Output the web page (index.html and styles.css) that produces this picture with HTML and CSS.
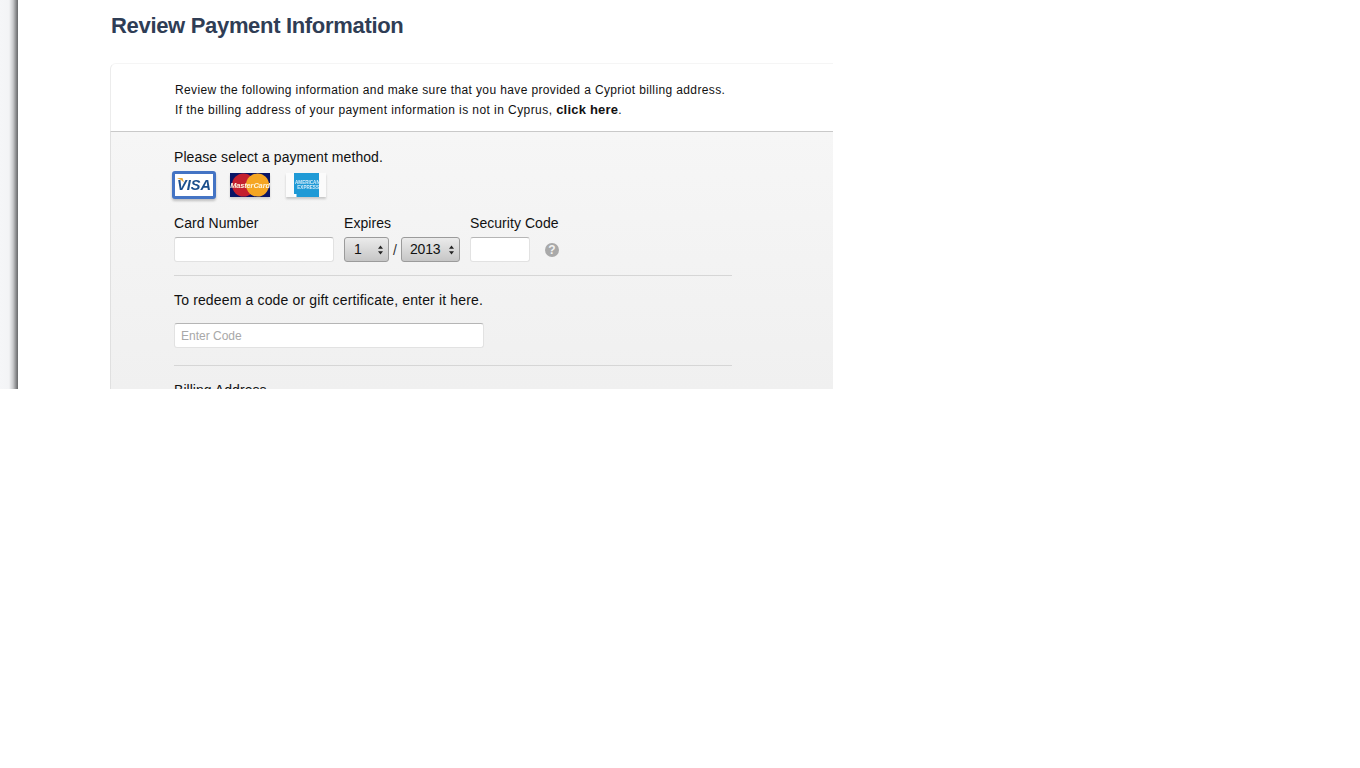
FILE: index.html
```html
<!DOCTYPE html>
<html lang="en">
<head>
<meta charset="utf-8">
<title>Review Payment Information</title>
<link rel="stylesheet" href="styles.css">
</head>
<body>
<div class="viewport">
  <div class="strip"></div>
  <main class="main">
    <h1 class="title">Review Payment Information</h1>
    <section class="card">
      <div class="notice">
        <p>Review the following information and make sure that you have provided a Cypriot billing address.</p>
        <p class="notice-second">If the billing address of your payment information is not in Cyprus, <a class="link" href="#">click here</a>.</p>
      </div>
      <div class="form">
        <div class="prompt">Please select a payment method.</div>
        <div class="methods">
          <div class="method method-visa">
            <svg width="46" height="32" viewBox="0 0 46 32">
              <rect x="2.5" y="2.5" width="41" height="25" rx="1.5" fill="#fff" stroke="#4474c4" stroke-width="3"/>
              <path d="M6 8 L11.5 8 L13 12.5 Q10.5 9.5 6 8Z" fill="#e9a93a"/>
              <text x="23" y="19.5" text-anchor="middle" class="visa-text">VISA</text>
            </svg>
          </div>
          <div class="method method-mc">
            <svg width="40" height="24" viewBox="0 0 40 24">
              <rect width="40" height="24" fill="#0a1566"/>
              <circle cx="13.5" cy="12" r="11.5" fill="#c4202e"/>
              <circle cx="27.5" cy="12" r="11.5" fill="#f5a623"/>
              <text x="20" y="14.5" text-anchor="middle" class="mc-text">MasterCard</text>
            </svg>
          </div>
          <div class="method method-amex">
            <svg width="40" height="24" viewBox="0 0 40 24">
              <rect width="40" height="24" fill="#fbfbfb"/>
              <rect x="8" y="0" width="25" height="24" fill="#1f9ad6"/>
              <rect x="8" y="21" width="2.5" height="3" fill="#fff"/>
              <text x="9" y="11" class="amex-text">AMERICAN</text>
              <text x="33" y="16" text-anchor="end" class="amex-text">EXPRESS</text>
            </svg>
          </div>
        </div>
        <div class="fields">
          <div class="field">
            <label class="label" for="num">Card Number</label>
            <input class="input input-card" id="num" type="text">
          </div>
          <div class="field">
            <span class="label">Expires</span>
            <div class="expires">
              <div class="select select-month">
                <span class="select-value">1</span>
                <svg class="arrows" width="5" height="10" viewBox="0 0 5 10"><path d="M2.5 0.5 L5 3.8 H0Z M2.5 9.5 L5 6.2 H0Z" fill="#222"/></svg>
              </div>
              <span class="slash">/</span>
              <div class="select select-year">
                <span class="select-value">2013</span>
                <svg class="arrows" width="5" height="10" viewBox="0 0 5 10"><path d="M2.5 0.5 L5 3.8 H0Z M2.5 9.5 L5 6.2 H0Z" fill="#222"/></svg>
              </div>
            </div>
          </div>
          <div class="field">
            <label class="label" for="sec">Security Code</label>
            <div class="security">
              <input class="input input-sec" id="sec" type="text">
              <span class="help">?</span>
            </div>
          </div>
        </div>
        <hr class="rule rule-first">
        <div class="redeem">To redeem a code or gift certificate, enter it here.</div>
        <input class="input input-code" type="text" placeholder="Enter Code">
        <hr class="rule rule-second">
        <div class="billing">Billing Address</div>
      </div>
    </section>
  </main>
</div>
</body>
</html>
```
FILE: styles.css
```css
* { box-sizing: border-box; }
html, body { margin: 0; padding: 0; background: #fff; }
body { font-family: "Liberation Sans", Arial, sans-serif; color: #111; }

.viewport {
  display: flex;
  width: 833px;
  height: 389px;
  overflow: hidden;
}
.strip {
  flex: 0 0 18px;
  background: linear-gradient(to right, #f5f6f8 0, #f3f4f6 9px, #c9cacc 13px, #77787a 17px, #6a6b6d 18px);
}
.main { flex: 1; padding-left: 92px; min-width: 0; }

.title {
  margin: 0;
  padding: 12px 0 0 1px;
  height: 63px;
  font-size: 22px;
  line-height: 27px;
  font-weight: bold;
  letter-spacing: -0.32px;
  color: #2f3d55;
}

.notice {
  height: 69px;
  padding: 16px 0 0 64px;
  border-left: 1px solid #ececec;
  border-top: 1px solid #f5f5f5;
  border-bottom: 1px solid #c9c9c9;
  border-top-left-radius: 6px;
  font-size: 12px;
  line-height: 20px;
  letter-spacing: 0.375px;
  color: #111;
}
.notice p { margin: 0; }
.notice .notice-second { letter-spacing: 0.43px; }
.link { color: #111; font-size: 13px; font-weight: bold; text-decoration: none; letter-spacing: 0.2px; }

.form {
  height: 300px;
  padding: 17px 101px 0 63px;
  border-left: 1px solid #e0e0e0;
  background: linear-gradient(to bottom, #f6f6f6, #efefef);
  font-size: 14px;
}
.prompt { line-height: 17px; letter-spacing: 0.06px; }

.methods { display: flex; margin: 4px 0 0 -3px; height: 33px; align-items: flex-start; }
.method svg { display: block; }
.method-visa { filter: drop-shadow(0 2px 1px rgba(0,0,0,.22)); }
.method-mc { margin: 3px 0 0 13px; filter: drop-shadow(0 2px 1px rgba(0,0,0,.15)); }
.method-amex { margin: 3px 0 0 16px; filter: drop-shadow(0 2px 1px rgba(0,0,0,.18)); }
.visa-text { font: italic bold 14.5px "Liberation Sans", sans-serif; fill: #1c4f8c; }
.mc-text { font: italic bold 7.4px "Liberation Sans", sans-serif; fill: #fff6e0; letter-spacing: -0.1px; }
.amex-text { font: bold 4.6px "Liberation Sans", sans-serif; fill: #d5ecf9; }

.fields { display: flex; gap: 10px; margin-top: 12px; }
.field { display: flex; flex-direction: column; }
.label { line-height: 17px; margin-bottom: 5px; display: block; letter-spacing: 0.05px; }

.input {
  display: block;
  height: 25px;
  background: #fff;
  border: 1px solid #e2e2e2;
  border-top-color: #b5b5b5;
  border-radius: 3px;
  padding: 0 6px;
  font: 12px "Liberation Sans", sans-serif;
  outline: none;
}
.input::placeholder { color: #a8a8a8; opacity: 1; }
.input-card { width: 160px; }
.input-sec { width: 60px; }
.input-code { width: 310px; margin-top: 14px; }

.expires { display: flex; align-items: center; height: 25px; }
.select {
  position: relative;
  height: 25px;
  border: 1px solid #9b9b9b;
  border-radius: 3px;
  background: linear-gradient(to bottom, #ebebeb, #c6c6c6);
  line-height: 23px;
  font-size: 14px;
  color: #111;
}
.select-month { width: 45px; padding-left: 9px; }
.select-year { width: 59px; padding-left: 8px; letter-spacing: -0.2px; }
.arrows { position: absolute; right: 5px; top: 7px; }
.slash { width: 12px; text-align: center; color: #333; }

.security { display: flex; align-items: center; height: 25px; }
.help {
  width: 14px;
  height: 14px;
  margin-left: 15px;
  border-radius: 50%;
  background: #a9a9a9;
  color: #f2f2f2;
  font-size: 12px;
  font-weight: bold;
  line-height: 14px;
  text-align: center;
}

.rule { margin: 0; border: 0; border-top: 1px solid #d6d6d6; }
.rule-first { margin-top: 13px; }
.rule-second { margin-top: 17px; }
.redeem { margin-top: 16px; line-height: 17px; letter-spacing: 0.15px; }
.billing { margin-top: 16px; line-height: 17px; letter-spacing: 0.05px; }
```
